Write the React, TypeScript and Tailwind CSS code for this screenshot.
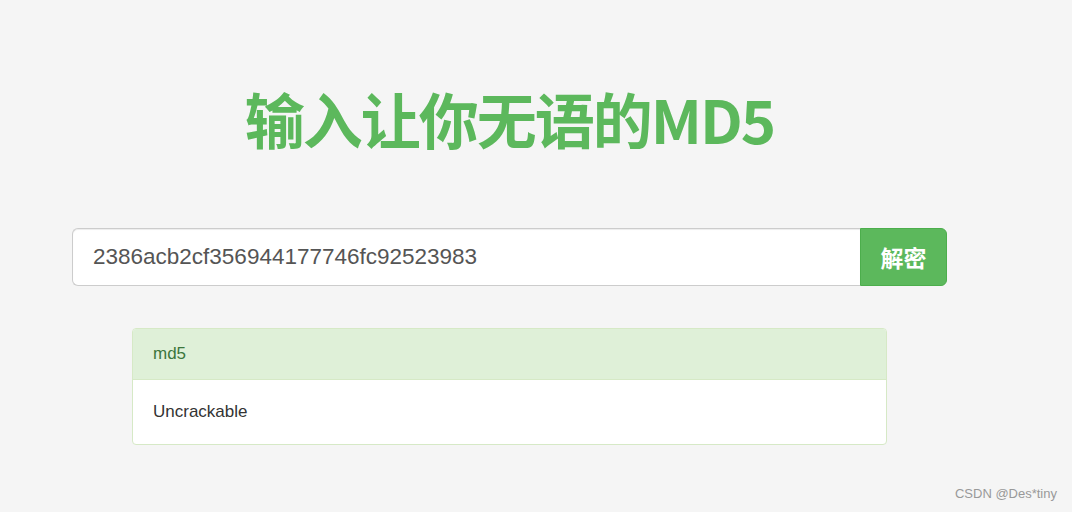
export default function App() {
  return (
    <div className="relative min-h-[512px] w-full bg-[#f5f5f5] font-['Liberation_Sans','Noto_Sans_CJK_SC',sans-serif]">
      <div className="ml-[72px] w-[875px] pt-[78px]">
        <h1 className="text-center text-[60px] leading-[80px] font-bold tracking-[-2px] text-[#5cb85c] font-['Noto_Sans_CJK_SC',sans-serif]">
          输入让你无语的MD5
        </h1>

        <div className="mt-[70px] flex h-[58px]">
          <div className="flex flex-1 items-center rounded-l-[6px] border border-r-0 border-[#ccc] bg-white px-[20px] text-[22.5px] text-[#555] shadow-[inset_0_1px_1px_rgba(0,0,0,0.075)]">
            2386acb2cf356944177746fc92523983
          </div>
          <button className="w-[87px] rounded-r-[6px] border border-[#4cae4c] bg-[#5cb85c] text-[23px] font-bold text-white font-['Noto_Sans_CJK_SC',sans-serif]">
            解密
          </button>
        </div>

        <div className="mx-[60px] mt-[42px] overflow-hidden rounded-[4px] border border-[#d6e9c6] bg-white">
          <div className="flex h-[51px] items-center border-b border-[#d6e9c6] bg-[#dff0d8] px-[20px] text-[17px] text-[#3c763d]">
            md5
          </div>
          <div className="flex h-[64px] items-center px-[20px] text-[17px] text-[#333]">
            Uncrackable
          </div>
        </div>
      </div>

      <div className="absolute right-[15px] bottom-[9px] text-[13px] text-[#999]">CSDN @Des*tiny</div>
    </div>
  )
}
